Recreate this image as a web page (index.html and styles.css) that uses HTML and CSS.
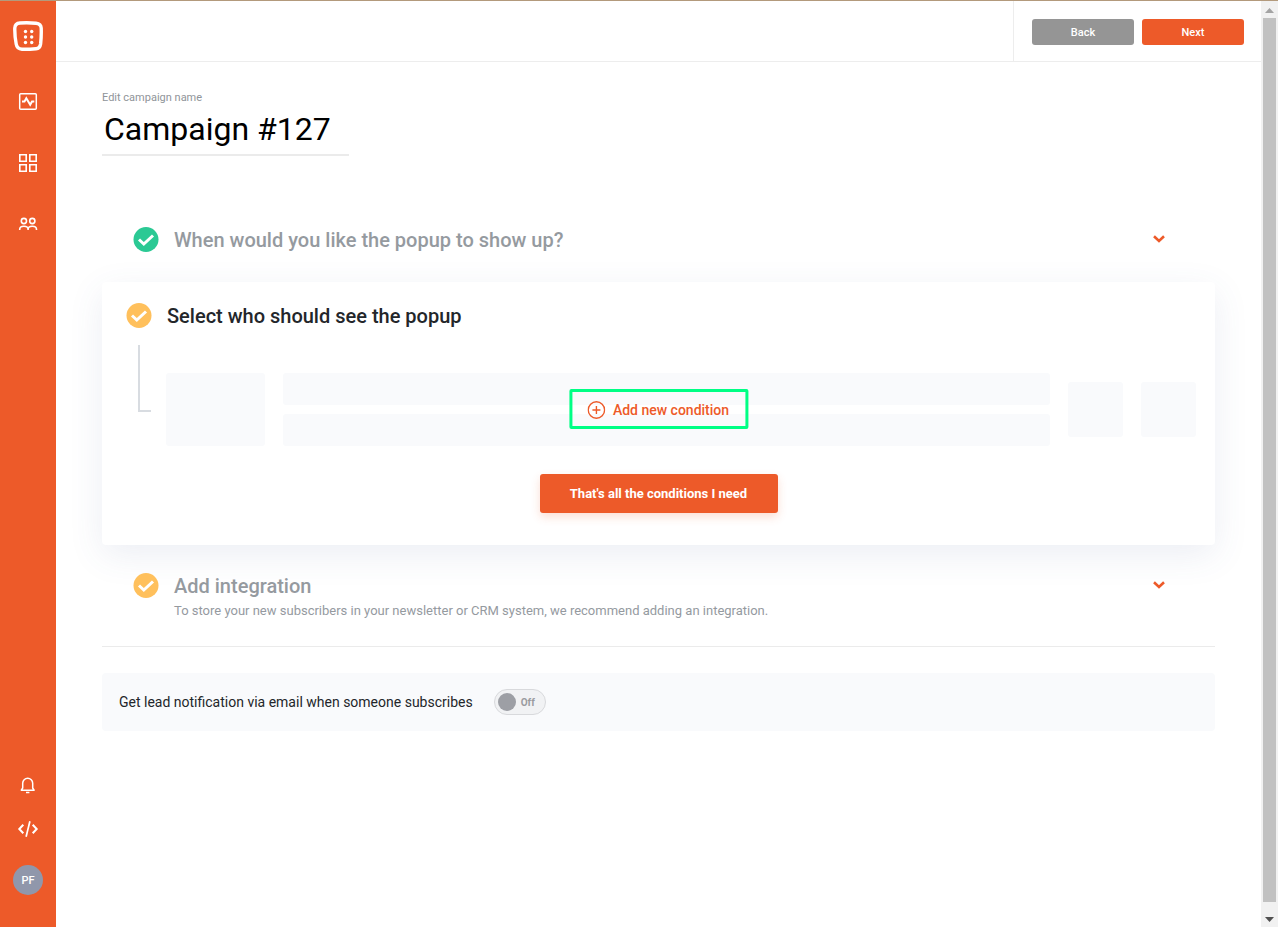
FILE: index.html
```html
<!DOCTYPE html>
<html lang="en">
<head>
  <meta charset="UTF-8">
  <meta name="viewport" content="width=device-width, initial-scale=1.0">
  <title>Campaign #127</title>
  <link rel="stylesheet" href="styles.css">
</head>
<body>
  <nav class="sidebar">
    <a href="#" class="logo" aria-label="Home">
      <svg width="30" height="30" viewBox="0 0 30 30">
        <path d="M7 2Q15 1.500 23 2.200Q28 2.800 28.200 7Q28.500 15 27.600 23Q27 27.400 23 27.700Q15 28.400 9 28.200Q4 28 3.200 23Q1.600 15 1.800 7Q2 2.400 7 2Z" fill="none" stroke="#fff" stroke-width="3.400"/>
        <g fill="#fff">
          <circle cx="12.500" cy="10.500" r="1.700"/><circle cx="18.700" cy="10.500" r="1.700"/>
          <circle cx="12.500" cy="16" r="1.700"/><circle cx="18.700" cy="16" r="1.700"/>
          <circle cx="12.500" cy="21.500" r="1.700"/><circle cx="18.700" cy="21.500" r="1.700"/>
        </g>
      </svg>
    </a>
    <a href="#" class="nav-link" aria-label="Analytics">
      <svg width="20" height="20" viewBox="0 0 20 20" fill="none" stroke="#fff" stroke-width="1.500">
        <rect x="1.700" y="1.700" width="16.600" height="15.600" rx="1"/>
        <path d="M4 9.500h2.500L8.300 6.300l3.900 6.400 1.800-3.200h2.300" stroke-width="2"/>
      </svg>
    </a>
    <a href="#" class="nav-link" aria-label="Campaigns">
      <svg width="20" height="20" viewBox="0 0 20 20" fill="none" stroke="#fff" stroke-width="1.600">
        <path d="M1.800 1.800h6.400v6.400H1.800zM11.800 1.800h6.400v6.400h-6.400zM1.800 11.800h6.400v6.400H1.800zM11.800 11.800h6.400v6.400h-6.400z"/>
      </svg>
    </a>
    <a href="#" class="nav-link" aria-label="Subscribers">
      <svg width="20" height="20" viewBox="0 0 20 20" fill="none" stroke="#fff" stroke-width="1.600">
        <circle cx="5.900" cy="7" r="2.600"/>
        <circle cx="14.300" cy="7" r="2.600"/>
        <path d="M1.700 16v-.6c0-4.300 8.400-4.300 8.400 0v.6v-.6c0-4.300 8.400-4.300 8.400 0v.6"/>
      </svg>
    </a>
    <div class="sidebar-bottom">
      <a href="#" aria-label="Notifications">
        <svg width="20" height="20" viewBox="0 0 20 20" fill="none" stroke="#fff" stroke-width="1.500">
          <path d="M3.300 15.200h12.800l-1.400-2.200V8.200a5 5 0 0 0-10 0V13zM8 17.600h3.400" stroke-linejoin="round"/>
        </svg>
      </a>
      <a href="#" aria-label="Embed code">
        <svg width="22" height="20" viewBox="0 0 22 20" fill="none" stroke="#fff" stroke-width="2">
          <path d="M6.300 5.700L2.300 10l4 4.300M15.700 5.700l4 4.300-4 4.300"/>
          <path d="M12.900 2.200L9.100 17.800" stroke-width="1.700"/>
        </svg>
      </a>
      <button class="avatar">PF</button>
    </div>
  </nav>

  <div class="page">
    <header class="topbar">
      <div class="topbar-actions">
        <button class="btn btn-back">Back</button>
        <button class="btn">Next</button>
      </div>
    </header>

    <main class="content">
      <div class="name-field">
        <label for="campaign-name">Edit campaign name</label>
        <input type="text" id="campaign-name" value="Campaign #127">
      </div>

      <section class="step">
        <svg class="check check-done" viewBox="0 0 26 26"><circle cx="13" cy="12.500" r="12.500"/><path d="M6 12.500l4.800 4.500L20 8.500"/></svg>
        <h2>When would you like the popup to show up?</h2>
        <button class="toggle-step" aria-label="Expand">
          <svg width="12" height="8" viewBox="0 0 12 8"><path d="M1 1.300L6 6l5-4.700" stroke-width="2.600"/></svg>
        </button>
      </section>

      <section class="card">
        <div class="card-head">
          <svg class="check" viewBox="0 0 26 26"><circle cx="13" cy="12.500" r="12.500"/><path d="M6 12.500l4.800 4.500L20 8.500"/></svg>
          <h2>Select who should see the popup</h2>
        </div>
        <div class="conditions">
          <div class="branch"></div>
          <div class="block block-type"></div>
          <div class="block-lines">
            <div class="block"></div>
            <div class="block"></div>
          </div>
          <div class="block block-small"></div>
          <div class="block block-small"></div>
          <button class="add-condition">
            <svg width="18" height="18" viewBox="0 0 18 18" fill="none" stroke="currentColor" stroke-width="1.400">
              <circle cx="9" cy="9" r="8.200"/>
              <path d="M9 5v8M5 9h8"/>
            </svg>
            Add new condition
          </button>
        </div>
        <button class="btn btn-large">That's all the conditions I need</button>
      </section>

      <section class="step step-last">
        <svg class="check" viewBox="0 0 26 26"><circle cx="13" cy="12.500" r="12.500"/><path d="M6 12.500l4.800 4.500L20 8.500"/></svg>
        <div>
          <h2>Add integration</h2>
          <p>To store your new subscribers in your newsletter or CRM system, we recommend adding an integration.</p>
        </div>
        <button class="toggle-step" aria-label="Expand">
          <svg width="12" height="8" viewBox="0 0 12 8"><path d="M1 1.300L6 6l5-4.700" stroke-width="2.600"/></svg>
        </button>
      </section>

      <div class="notification">
        <label for="lead-email">Get lead notification via email when someone subscribes</label>
        <label class="switch">
          <input type="checkbox" id="lead-email">
          <span class="knob"></span>
          <span>Off</span>
        </label>
      </div>
    </main>
  </div>

  <div class="scrollbar">
    <svg width="9" height="5" viewBox="0 0 9 5"><path d="M0 5l4.500-5L9 5z" fill="#a3a3a3"/></svg>
    <div class="thumb"></div>
    <svg width="9" height="5" viewBox="0 0 9 5"><path d="M0 0h9L4.500 5z" fill="#505050"/></svg>
  </div>
</body>
</html>
```
FILE: styles.css
```css
* {
  box-sizing: border-box;
}

body {
  margin: 0;
  min-height: 100vh;
  display: flex;
  border-top: 1px solid #b39a7c;
  background-color: #fff;
  color: #23262a;
  font-family: Roboto, Arial, sans-serif;
}

h2,
p {
  margin: 0;
}

svg {
  display: block;
}

button {
  font-family: inherit;
  border: none;
  cursor: pointer;
}

/* sidebar */
.sidebar {
  flex: none;
  width: 56px;
  padding: 20px 0 32px;
  display: flex;
  flex-direction: column;
  align-items: center;
  background-color: #ed5a29;
}

.logo {
  margin-bottom: 41px;
}

.nav-link {
  margin-bottom: 41px;
}

.sidebar-bottom {
  margin-top: auto;
  display: flex;
  flex-direction: column;
  align-items: center;
  gap: 24px;
}

.avatar {
  width: 30px;
  height: 30px;
  margin-top: 2px;
  padding: 0;
  border-radius: 50%;
  background-color: #9097ab;
  color: #fff;
  font-size: 11px;
  font-weight: 500;
}

/* top bar */
.page {
  flex: 1;
  min-width: 0;
}

.topbar {
  height: 61px;
  display: flex;
  justify-content: flex-end;
  border-bottom: 1px solid #ededed;
}

.topbar-actions {
  padding: 18px 17px 0 18px;
  display: flex;
  align-items: flex-start;
  gap: 8px;
  border-left: 1px solid #ededed;
}

.btn {
  width: 102px;
  height: 26px;
  padding: 0;
  border-radius: 3px;
  background-color: #ed5a29;
  color: #fff;
  font-size: 11px;
  font-weight: 500;
}

.btn-back {
  background-color: #959595;
}

/* content */
.content {
  padding: 28px 46px;
}

.name-field {
  width: 247px;
}

.name-field label {
  display: block;
  color: #8f9499;
  font-size: 11px;
  line-height: 16px;
}

.name-field input {
  display: block;
  width: 100%;
  height: 50px;
  padding: 0 2px 2px;
  border: none;
  border-bottom: 2px solid #ebebeb;
  outline: none;
  background: none;
  color: #000;
  font-family: inherit;
  font-size: 32px;
}

h2 {
  font-size: 20px;
  line-height: 26px;
  font-weight: 500;
}

.check {
  flex: none;
  width: 26px;
  height: 26px;
  fill: #ffc05c;
}

.check path {
  fill: none;
  stroke: #fff;
  stroke-width: 3;
}

.check-done {
  fill: #2bc994;
}

.step {
  margin-top: 71px;
  padding: 0 50px 0 31px;
  display: flex;
  align-items: flex-start;
  gap: 15px;
  color: #959a9f;
}

.step p {
  font-size: 13px;
  line-height: 24px;
}

.toggle-step {
  margin-left: auto;
  padding: 8px 0;
  background: none;
}

.toggle-step path {
  fill: none;
  stroke: #ed5a29;
}

.card {
  margin-top: 29px;
  padding: 21px 0 32px;
  border-radius: 4px;
  box-shadow: 0 10px 35px rgba(70, 90, 150, 0.1);
}

.card-head {
  padding-left: 24px;
  display: flex;
  gap: 15px;
}

.conditions {
  position: relative;
  margin-top: 16px;
  padding: 28px 19px 0 24px;
  display: flex;
  align-items: center;
  gap: 18px;
}

.branch {
  align-self: flex-start;
  width: 13px;
  height: 67px;
  margin: -28px -3px 0 12px;
  border-left: 2px solid #d8dce1;
  border-bottom: 2px solid #d8dce1;
}

.block {
  border-radius: 3px;
  background-color: #f9fafc;
}

.block-type {
  width: 99px;
  height: 73px;
}

.block-lines {
  flex: 1;
  display: flex;
  flex-direction: column;
  gap: 9px;
}

.block-lines .block {
  height: 32px;
}

.block-small {
  width: 55px;
  height: 55px;
}

/* sits over the placeholder rows */
.add-condition {
  position: absolute;
  top: 44px;
  left: 50%;
  transform: translateX(-50%);
  height: 40px;
  padding: 1px 16px 0 15px;
  display: flex;
  align-items: center;
  gap: 8px;
  border: 3px solid #00ff85;
  border-radius: 2px;
  background: none;
  color: #ed5a29;
  font-size: 14px;
  font-weight: 500;
  white-space: nowrap;
}

.btn-large {
  display: block;
  width: 238px;
  height: 39px;
  margin: 28px auto 0;
  font-size: 13px;
  font-weight: 700;
  box-shadow: 0 4px 10px rgba(237, 90, 41, 0.2);
}

.step-last {
  margin-top: 28px;
  padding-bottom: 23px;
  border-bottom: 1px solid #ebebeb;
}

.notification {
  margin-top: 26px;
  padding: 16px 17px;
  display: flex;
  align-items: center;
  gap: 21px;
  border-radius: 4px;
  background-color: #f9fafc;
  font-size: 14px;
}

.switch {
  width: 52px;
  height: 26px;
  padding: 0 3px;
  display: flex;
  align-items: center;
  gap: 5px;
  border: 1px solid #d8d9dc;
  border-radius: 13px;
  background-color: #f1f2f4;
  color: #9a9ba0;
  font-size: 10px;
  font-weight: 700;
  cursor: pointer;
}

.switch input {
  position: absolute;
  opacity: 0;
}

.knob {
  width: 18px;
  height: 18px;
  border-radius: 50%;
  background-color: #9d9fa5;
}

/* scrollbar */
.scrollbar {
  flex: none;
  width: 17px;
  padding: 7px 2px 5px;
  display: flex;
  flex-direction: column;
  align-items: center;
  gap: 5px;
  background-color: #f1f1f1;
}

.thumb {
  flex: 1;
  width: 13px;
  margin-bottom: 10px;
  background-color: #c1c1c1;
}
```
